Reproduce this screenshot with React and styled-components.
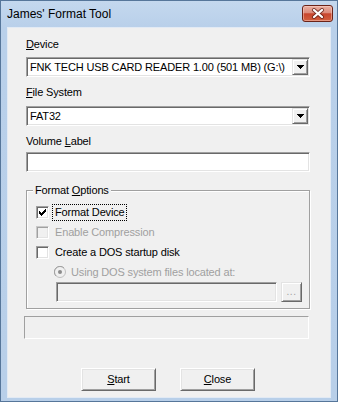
import React from "react";
import styled, { createGlobalStyle } from "styled-components";

const GlobalStyle = createGlobalStyle`
  html, body { margin: 0; padding: 0; background: #fff; }
  body { font-family: "Liberation Sans", Arial, sans-serif; font-size: 11px; color: #000; }
`;

const Window = styled.div`
  width: 338px;
  height: 402px;
  box-sizing: border-box;
  display: flex;
  flex-direction: column;
  border: 1px solid #56769a;
  background: linear-gradient(to bottom, #c4d8ee 0px, #b9d0ea 26px, #b8cfe9 100%);
`;

const TitleBar = styled.div`
  height: 26px;
  flex: none;
  display: flex;
  align-items: flex-start;
  justify-content: space-between;
  padding: 0 4px 0 6px;
`;

const Title = styled.div`
  margin-top: 6px;
  font-size: 12px;
  line-height: 15px;
  color: #000;
`;

const CloseButton = styled.div`
  margin-top: 4px;
  width: 31px;
  height: 17px;
  box-sizing: border-box;
  border: 1px solid #6b2318;
  border-radius: 3px;
  display: flex;
  align-items: center;
  justify-content: center;
  background: linear-gradient(to bottom, #eab0a2 0%, #dc8b7b 45%, #c8452d 52%, #d2603f 100%);
  box-shadow: inset 0 0 0 1px rgba(255, 220, 210, 0.45);
`;

const Client = styled.div`
  flex: 1;
  margin: 0 6px 3px 6px;
  border: 1px solid #e2eaf4;
  background: #f0f0f0;
  display: flex;
  flex-direction: column;
  padding: 0 20px 0 18px;
  letter-spacing: -0.15px;
`;

const FieldLabel = styled.div`
  margin-top: ${(p) => p.$top}px;
  height: 13px;
  line-height: 13px;
  white-space: nowrap;
`;

const sunken = `
  box-sizing: border-box;
  border-style: solid;
  border-width: 1px;
  border-color: #a0a0a0 #ffffff #ffffff #a0a0a0;
  box-shadow: inset 1px 1px 0 #696969, inset -1px -1px 0 #e3e3e3;
`;

const raised = `
  box-sizing: border-box;
  border-style: solid;
  border-width: 1px;
  border-color: #e3e3e3 #696969 #696969 #e3e3e3;
  box-shadow: inset 1px 1px 0 #ffffff, inset -1px -1px 0 #a0a0a0;
  background: #f0f0f0;
`;

const Combo = styled.div`
  ${sunken}
  margin-top: ${(p) => p.$top}px;
  height: 20px;
  padding: 1px;
  background: #fff;
  display: flex;
  align-items: center;
`;

const ComboText = styled.div`
  flex: 1;
  padding-left: 2px;
  line-height: 14px;
  white-space: nowrap;
  overflow: hidden;
`;

const DropButton = styled.div`
  ${raised}
  width: 16px;
  height: 16px;
  flex: none;
  display: flex;
  align-items: center;
  justify-content: center;
`;

const TextBox = styled.div`
  ${sunken}
  margin-top: ${(p) => p.$top || 0}px;
  height: 20px;
  background: ${(p) => (p.$disabled ? "#f0f0f0" : "#ffffff")};
  flex: ${(p) => (p.$grow ? 1 : "none")};
`;

const GroupBox = styled.div`
  position: relative;
  margin-top: 18px;
  border: 1px solid #a0a0a0;
  box-shadow: inset 1px 1px 0 #fff, 1px 1px 0 #fff;
  padding: 11px 7px 6px 9px;
  display: flex;
  flex-direction: column;
`;

const GroupTitle = styled.span`
  position: absolute;
  top: -7px;
  left: 6px;
  padding: 0 2px;
  line-height: 13px;
  background: #f0f0f0;
`;

const Row = styled.div`
  height: 20px;
  display: flex;
  align-items: center;
  padding-left: ${(p) => p.$indent || 0}px;
`;

const CheckBox = styled.div`
  ${sunken}
  width: 13px;
  height: 13px;
  flex: none;
  display: flex;
  align-items: center;
  justify-content: center;
  background: ${(p) => (p.$disabled ? "#f0f0f0" : "#ffffff")};
  ${(p) =>
    p.$disabled
      ? "border-color: #c8c8c8 #ffffff #ffffff #c8c8c8; box-shadow: inset 1px 1px 0 #a0a0a0, inset -1px -1px 0 #e3e3e3;"
      : ""}
`;

const OptionText = styled.span`
  margin-left: ${(p) => (p.$gap != null ? p.$gap : p.$focused ? 3 : 6)}px;
  padding: ${(p) => (p.$focused ? "1px 1px 1px 2px" : "0")};
  border: ${(p) => (p.$focused ? "1px dotted #000" : "none")};
  line-height: 13px;
  white-space: nowrap;
  color: ${(p) => (p.$disabled ? "#a0a0a0" : "#000")};
`;

const RadioWrap = styled.div`
  width: 12px;
  height: 12px;
  flex: none;
  display: flex;
`;

const PathRow = styled.div`
  height: 20px;
  display: flex;
  gap: 4px;
  padding-left: 20px;
`;

const SmallButton = styled.div`
  ${raised}
  width: 21px;
  height: 20px;
  flex: none;
  display: flex;
  align-items: flex-end;
  justify-content: center;
  padding-bottom: 4px;
  color: #a0a0a0;
  font-size: 10px;
  line-height: 10px;
  letter-spacing: 0.5px;
`;

const Progress = styled.div`
  margin: 7px 1px 0 -2px;
  height: 23px;
  box-sizing: border-box;
  border-style: solid;
  border-width: 1px;
  border-color: #a0a0a0 #ffffff #ffffff #a0a0a0;
  background: #f0f0f0;
`;

const ButtonRow = styled.div`
  margin-top: 29px;
  display: flex;
  justify-content: center;
  gap: 24px;
`;

const PushButton = styled.div`
  box-sizing: border-box;
  width: 75px;
  height: 23px;
  background: #f0f0f0;
  border-style: solid;
  border-width: 1px;
  border-color: #ffffff #696969 #696969 #ffffff;
  box-shadow: inset 1px 1px 0 #e3e3e3, inset -1px -1px 0 #a0a0a0;
  display: flex;
  align-items: center;
  justify-content: center;
  line-height: 13px;
`;

const Check = () => (
  <svg width="7" height="7" viewBox="0 0 7 7" shapeRendering="crispEdges">
    <path
      fill="#000"
      d="M0 2h1v3H0z M1 3h1v3H1z M2 4h1v3H2z M3 3h1v3H3z M4 2h1v3H4z M5 1h1v3H5z M6 0h1v3H6z"
    />
  </svg>
);

const Radio = () => (
  <RadioWrap>
    <svg width="12" height="12" viewBox="0 0 12 12">
      <circle cx="6" cy="6" r="5.5" fill="#f0f0f0" stroke="#c0c0c0" />
      <path d="M2 10 A5.5 5.5 0 0 1 10 2" stroke="#a0a0a0" strokeWidth="1" fill="none" />
      <circle cx="6" cy="6" r="2" fill="#8c8c8c" />
    </svg>
  </RadioWrap>
);

const DownArrow = () => (
  <svg width="7" height="4" viewBox="0 0 7 4" shapeRendering="crispEdges">
    <path fill="#000" d="M0 0h7v1H0z M1 1h5v1H1z M2 2h3v1H2z M3 3h1v1H3z" />
  </svg>
);

const CloseX = () => (
  <svg width="14" height="11" viewBox="0 0 14 11">
    <path d="M3 2 L11 9 M11 2 L3 9" stroke="#5a1810" strokeWidth="4" strokeLinecap="round" opacity="0.75" />
    <path d="M3 2 L11 9 M11 2 L3 9" stroke="#ffffff" strokeWidth="2.3" strokeLinecap="round" />
  </svg>
);

export default function App() {
  return (
    <>
      <GlobalStyle />
      <Window>
        <TitleBar>
          <Title>James' Format Tool</Title>
          <CloseButton>
            <CloseX />
          </CloseButton>
        </TitleBar>
        <Client>
          <FieldLabel $top={10}>
            <u>D</u>evice
          </FieldLabel>
          <Combo $top={6}>
            <ComboText>FNK TECH USB CARD READER 1.00 (501 MB) (G:\)</ComboText>
            <DropButton>
              <DownArrow />
            </DropButton>
          </Combo>
          <FieldLabel $top={9}>
            <u>F</u>ile System
          </FieldLabel>
          <Combo $top={7}>
            <ComboText>FAT32</ComboText>
            <DropButton>
              <DownArrow />
            </DropButton>
          </Combo>
          <FieldLabel $top={9}>
            Volume <u>L</u>abel
          </FieldLabel>
          <TextBox $top={4} />
          <GroupBox>
            <GroupTitle>
              Format <u>O</u>ptions
            </GroupTitle>
            <Row>
              <CheckBox>
                <Check />
              </CheckBox>
              <OptionText $focused>Format Device</OptionText>
            </Row>
            <Row>
              <CheckBox $disabled />
              <OptionText $disabled>Enable Compression</OptionText>
            </Row>
            <Row>
              <CheckBox />
              <OptionText>Create a DOS startup disk</OptionText>
            </Row>
            <Row $indent={18}>
              <Radio />
              <OptionText $disabled $gap={5}>
                Using DOS system files located at:
              </OptionText>
            </Row>
            <PathRow>
              <TextBox $disabled $grow />
              <SmallButton>...</SmallButton>
            </PathRow>
          </GroupBox>
          <Progress />
          <ButtonRow>
            <PushButton>
              <span>
                <u>S</u>tart
              </span>
            </PushButton>
            <PushButton>
              <span>
                <u>C</u>lose
              </span>
            </PushButton>
          </ButtonRow>
        </Client>
      </Window>
    </>
  );
}
